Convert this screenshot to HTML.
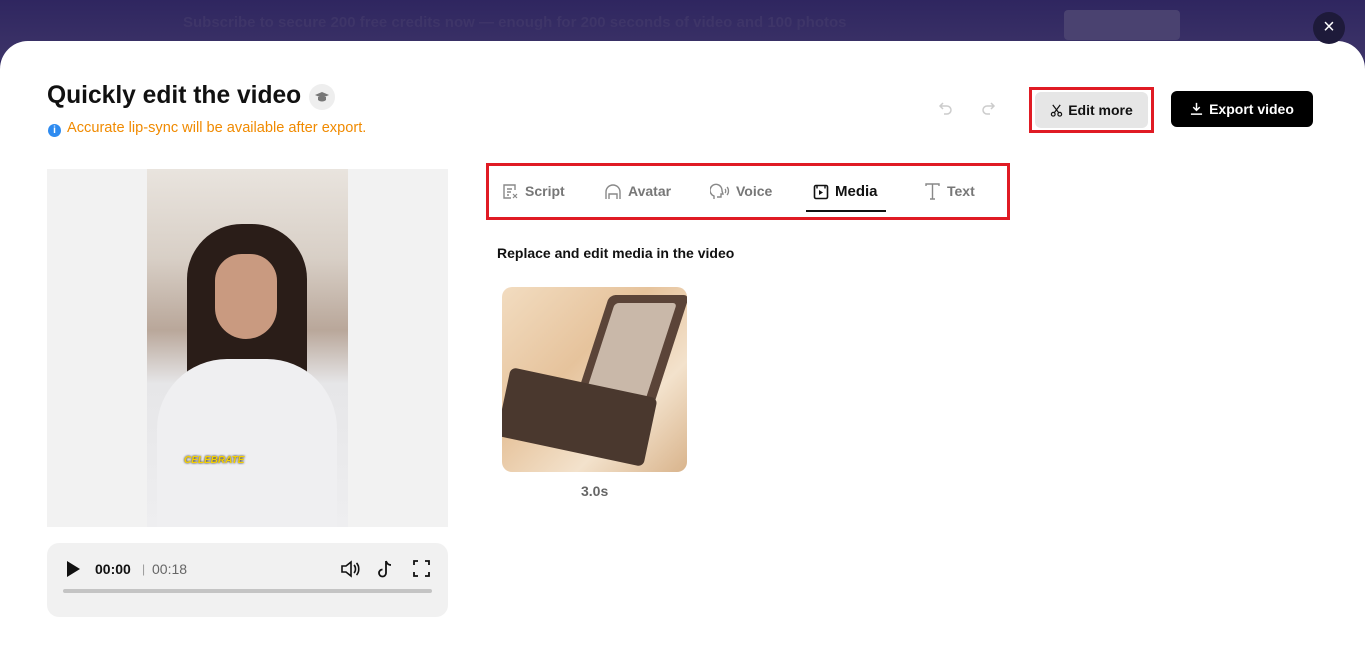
<!DOCTYPE html>
<html><head><meta charset="utf-8"><style>
*{margin:0;padding:0;box-sizing:border-box}
body{width:1365px;height:641px;overflow:hidden;font-family:"Liberation Sans",sans-serif;background:#2e2560;position:relative}
.banner{position:absolute;left:0;top:0;width:1365px;height:60px;background:linear-gradient(#2f2660,#3d3468);}
.banner span{position:absolute;left:183px;top:14px;color:#3e3568;font-size:15px;font-weight:bold}
.banner b{position:absolute;left:1064px;top:10px;width:116px;height:30px;background:#4a4270;border-radius:4px}
.close{position:absolute;left:1313px;top:12px;width:32px;height:32px;border-radius:50%;background:#1e1a3a;color:#fff;text-align:center;line-height:31px;font-size:20px}
.modal{position:absolute;left:0;top:41px;width:1365px;height:620px;background:#fff;border-radius:28px 28px 0 0}
h1{position:absolute;left:47px;top:82px;font-size:24.6px;color:#111;font-weight:bold}
.cap{position:absolute;left:309px;top:84px;width:26px;height:26px;border-radius:50%;background:#eee}
.note{position:absolute;left:48px;top:120px;font-size:14.6px;color:#f08a00}
.note i{display:inline-block;width:13px;height:13px;border-radius:50%;background:#2e8bf0;color:#fff;font-size:10px;text-align:center;line-height:13px;font-style:normal;font-weight:bold;margin-right:6px;vertical-align:-1px}
.undo{position:absolute;top:100px;color:#ccc;font-size:16px}
.editbox{position:absolute;left:1029px;top:87px;width:125px;height:46px;border:3px solid #e01b24}
.edit{position:absolute;left:1035px;top:92px;width:113px;height:36px;background:#e6e6e6;border-radius:6px;font-size:14px;font-weight:bold;line-height:36px;text-align:center;color:#111}
.export{position:absolute;left:1171px;top:91px;width:142px;height:36px;background:#000;border-radius:6px;color:#fff;font-size:14px;font-weight:bold;line-height:36px;text-align:center}
.video{position:absolute;left:47px;top:169px;width:401px;height:358px;background:#f2f2f2}
.person{position:absolute;left:147px;top:169px;width:201px;height:358px;background:linear-gradient(180deg,#e9e4de 0%,#d8cfc6 25%,#b9a79a 45%,#e6e6e8 60%,#eeeef0 100%);overflow:hidden}
.hair{position:absolute;left:40px;top:55px;width:120px;height:170px;border-radius:55px 55px 20px 20px;background:#2a1d18}
.face{position:absolute;left:68px;top:85px;width:62px;height:85px;border-radius:31px 31px 36px 36px;background:#c99a80}
.shirt{position:absolute;left:10px;top:190px;width:180px;height:180px;border-radius:70px 70px 0 0;background:#efeff1}
.celebrate{position:absolute;left:37px;top:286px;font-size:10px;font-weight:bold;font-style:italic;color:#f5d000;text-shadow:0 0 2px #000}
.ctrl{position:absolute;left:47px;top:543px;width:401px;height:74px;background:#f1f1f1;border-radius:12px}
.ctrl .t{position:absolute;top:18px;font-size:14px}
.bar{position:absolute;left:16px;top:46px;width:369px;height:4px;border-radius:2px;background:#c4c4c4}
.tabbox{position:absolute;left:486px;top:163px;width:524px;height:57px;border:3px solid #e01b24}
.tab{position:absolute;top:183px;font-size:14px;font-weight:bold;color:#777}
.tab svg{vertical-align:-4px;margin-right:6px}
.ul{position:absolute;left:806px;top:210px;width:80px;height:2px;background:#111}
.sub{position:absolute;left:497px;top:245px;font-size:14px;font-weight:bold;color:#111}
.thumb{position:absolute;left:502px;top:287px;width:185px;height:185px;border-radius:10px;overflow:hidden;background:linear-gradient(135deg,#f2dcc0,#e6c39c 40%,#f3e2cc 70%,#d9b48c)}
.mirror{position:absolute;left:88px;top:8px;width:80px;height:120px;background:#5b4438;transform:skewX(-18deg);border-radius:6px}
.mirror::after{content:"";position:absolute;left:8px;top:8px;width:62px;height:104px;background:#c9b8a9;border-radius:4px}
.pal{position:absolute;left:0;top:95px;width:150px;height:70px;background:#4a382e;transform:rotate(12deg);border-radius:6px}
.dur{position:absolute;left:581px;top:483px;font-size:14px;color:#666;font-weight:bold}
</style></head><body>
<div class="banner"><span>Subscribe to secure 200 free credits now — enough for 200 seconds of video and 100 photos</span><b></b></div>
<div class="modal"></div>
<div class="close">×</div>
<h1>Quickly edit the video</h1>
<div class="cap"><svg width="26" height="26" viewBox="0 0 26 26"><path d="M6 11l7-3 7 3-7 3z" fill="#777"/><path d="M9 13v3c2 2 6 2 8 0v-3" fill="#777"/></svg></div>
<div class="note"><i>i</i>Accurate lip-sync will be available after export.</div>
<svg class="undo" style="left:938px" width="16" height="16" viewBox="0 0 16 16"><path d="M5 3L2 6l3 3M2 6h7a4 4 0 010 8H6" fill="none" stroke="#ccc" stroke-width="1.5"/></svg>
<svg class="undo" style="left:980px" width="16" height="16" viewBox="0 0 16 16"><path d="M11 3l3 3-3 3M14 6H7a4 4 0 000 8h3" fill="none" stroke="#ccc" stroke-width="1.5"/></svg>
<div class="editbox"></div>
<div class="edit"><svg width="13" height="13" viewBox="0 0 14 14" style="vertical-align:-2px;margin-right:5px"><circle cx="3.5" cy="11" r="2" fill="none" stroke="#111" stroke-width="1.3"/><circle cx="10.5" cy="11" r="2" fill="none" stroke="#111" stroke-width="1.3"/><path d="M4.5 9.5L11 1M9.5 9.5L3 1" stroke="#111" stroke-width="1.3"/></svg>Edit more</div>
<div class="export"><svg width="13" height="13" viewBox="0 0 14 14" style="vertical-align:-1px;margin-right:6px"><path d="M7 1v8M3.5 5.5L7 9l3.5-3.5M1 13h12" fill="none" stroke="#fff" stroke-width="1.6"/></svg>Export video</div>
<div class="video"></div>
<div class="person"><div class="hair"></div><div class="face"></div><div class="shirt"></div><div class="celebrate">CELEBRATE</div></div>
<div class="ctrl">
<svg style="position:absolute;left:19px;top:18px" width="14" height="16" viewBox="0 0 14 16"><path d="M1 0l13 8-13 8z" fill="#111"/></svg>
<span class="t" style="left:48px;font-weight:bold;color:#111">00:00</span>
<span class="t" style="left:95px;color:#999;font-size:12px;top:19px">|</span>
<span class="t" style="left:105px;color:#666">00:18</span>
<svg style="position:absolute;left:293px;top:16px" width="20" height="20" viewBox="0 0 20 20"><path d="M2 7h4l5-4v14l-5-4H2z" fill="none" stroke="#111" stroke-width="1.6"/><path d="M14 6c2 2 2 6 0 8M16.5 4c3 3 3 9 0 12" fill="none" stroke="#111" stroke-width="1.6"/></svg>
<svg style="position:absolute;left:330px;top:16px" width="18" height="20" viewBox="0 0 18 20"><path d="M9 2v12a3.5 3.5 0 11-3.5-3.5M9 2c1 3 3 4 5 4" fill="none" stroke="#111" stroke-width="1.8"/></svg>
<svg style="position:absolute;left:366px;top:17px" width="17" height="17" viewBox="0 0 17 17"><path d="M1 5V1h4M12 1h4v4M16 12v4h-4M5 16H1v-4" fill="none" stroke="#111" stroke-width="1.8"/></svg>
<div class="bar"></div></div>
<div class="tabbox"></div>
<div class="tab" style="left:502px"><svg width="17" height="17" viewBox="0 0 17 17"><path d="M13 7V2H2v13h7M5 6h5M5 9h4M5 12h2" fill="none" stroke="#888" stroke-width="1.4"/><path d="M11 11l4 4M15 11l-4 4" stroke="#888" stroke-width="1.2"/></svg>Script</div>
<div class="tab" style="left:604px"><svg width="18" height="17" viewBox="0 0 18 17"><path d="M2 16V9a7 7 0 0114 0v7" fill="none" stroke="#888" stroke-width="1.4"/><path d="M5 16v-5h8v5" fill="none" stroke="#888" stroke-width="1.4"/></svg>Avatar</div>
<div class="tab" style="left:710px"><svg width="20" height="17" viewBox="0 0 20 17"><path d="M4 16v-3a6 6 0 118-5l1 3h-2v3H7" fill="none" stroke="#888" stroke-width="1.4"/><path d="M15 6c1 1 1 3 0 4M17 4c2 2 2 6 0 8" fill="none" stroke="#888" stroke-width="1.3"/></svg>Voice</div>
<div class="tab" style="left:813px;color:#111;font-size:15px"><svg width="16" height="16" viewBox="0 0 16 16"><rect x="1.5" y="1.5" width="13" height="13" rx="1.5" fill="none" stroke="#111" stroke-width="1.6"/><path d="M6 6l4 2.5L6 11z" fill="#111"/><path d="M4 1.5v3M12 1.5v3" stroke="#111" stroke-width="1.4"/></svg>Media</div>
<div class="tab" style="left:924px"><svg width="17" height="17" viewBox="0 0 17 17"><path d="M2 3V1h13v2M8.5 1v15M6 16h5" fill="none" stroke="#888" stroke-width="1.4"/></svg>Text</div>
<div class="ul"></div>
<div class="sub">Replace and edit media in the video</div>
<div class="thumb"><div class="mirror"></div><div class="pal"></div></div>
<div class="dur">3.0s</div>
</body></html>
